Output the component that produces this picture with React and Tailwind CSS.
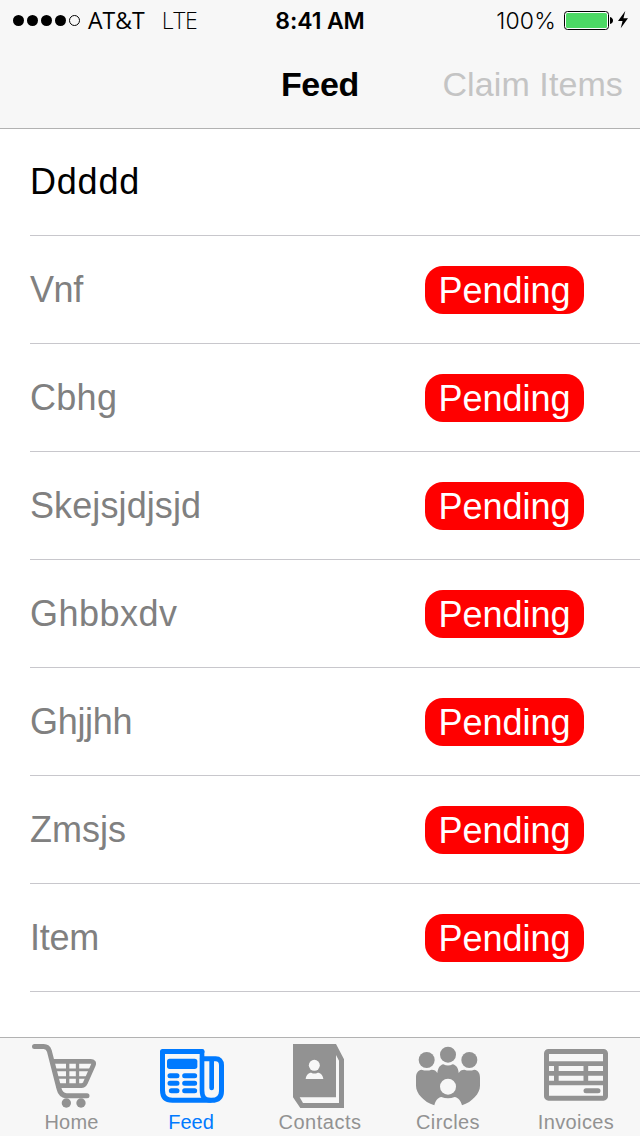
import React from "react";
import clsx from "clsx";

const items = [
  { name: "Ddddd", pending: false, tracking: "tracking-[0.8px]" },
  { name: "Vnf", pending: true, tracking: "tracking-[-0.4px]" },
  { name: "Cbhg", pending: true, tracking: "tracking-[0.3px]" },
  { name: "Skejsjdjsjd", pending: true, tracking: "tracking-[0.1px]" },
  { name: "Ghbbxdv", pending: true, tracking: "tracking-[0.5px]" },
  { name: "Ghjjhh", pending: true, tracking: "tracking-[-0.3px]" },
  { name: "Zmsjs", pending: true, tracking: "tracking-[0px]" },
  { name: "Item", pending: true, tracking: "tracking-[-0.3px]" },
];

const CartIcon = () => (
  <svg className="w-16 h-16" viewBox="66 42 192 192" fill="none" stroke="currentColor" strokeLinecap="round" strokeLinejoin="round">
    <path d="M73.500 49.500H101C111 49.500 115 53 118 63L147 176C150 189 157 197 170 197H231" strokeWidth="15" />
    <path d="M129 94H242C250 94 253 98 250 105L226 159C223 165 221 167 214 167H145" strokeWidth="14" />
    <path d="M135 119.500H242M141 142.500H232" strokeWidth="8" strokeLinecap="butt" />
    <path d="M173 95V165M202.500 95V165" strokeWidth="10" strokeLinecap="butt" />
    <g fill="currentColor" stroke="none">
      <circle cx="169" cy="219" r="14" />
      <circle cx="213" cy="219" r="14" />
    </g>
  </svg>
);

const FeedIcon = () => (
  <svg className="w-16 h-16" viewBox="60 42 192 192" fill="none" stroke="currentColor" strokeLinecap="round" strokeLinejoin="round">
    <path d="M186 64.500H67.500V181C67.500 200 77 211 97 211H215C234 211 244.500 202 244.500 183V105C244.500 93 238 86 227 86H187" strokeWidth="15" />
    <path d="M186 64.500V181C186 201 193 211 212 211" strokeWidth="14" />
    <path d="M215 88V174" strokeWidth="14" />
    <rect x="81" y="86" width="91" height="31" rx="8" fill="currentColor" stroke="none" />
    <path d="M90 137.500H111M134 137.500H164M90 160H111M134 160H164M94 182H111M134 182H164" strokeWidth="15" />
  </svg>
);

const ContactsIcon = () => (
  <svg className="w-16 h-16" viewBox="84 42 192 192" fill="currentColor">
    <path fillRule="evenodd" d="M99 42H228L252 88V234H121L99 202ZM228 75V202H119L129 219H237V92Z" />
    <circle cx="163" cy="106" r="16.500" fill="#f7f7f7" />
    <path d="M137 147C138 136 145 128 154 128Q163 133 173 128C182 128 189 136 190 147Z" fill="#f7f7f7" />
  </svg>
);

const CirclesIcon = () => (
  <svg className="w-16 h-16" viewBox="78 42 192 192" fill="currentColor">
    <circle cx="110" cy="90" r="24" />
    <circle cx="174" cy="74" r="24" />
    <circle cx="238" cy="90" r="24" />
    <path d="M95 119Q110 124 125 119Q137 119 142 129C144 113 150 105 160 103Q174 110 188 103C198 105 205 113 206 129Q211 119 223 119Q238 124 253 119C264 120 270 129 270 143V167C270 190 247 215 216 226C213 213 205 203 194 201Q174 209 154 201C143 203 136 213 133 226C101 215 78 190 78 167V143C78 129 84 120 95 119Z" />
    <circle cx="174" cy="170" r="24" fill="#f7f7f7" />
  </svg>
);

const InvoicesIcon = () => (
  <svg className="w-16 h-16" viewBox="72 42 192 192" fill="none" stroke="currentColor">
    <rect x="79.500" y="64.500" width="177" height="140" rx="6" strokeWidth="15" />
    <path d="M80 101H256M80 130H256M80 159H256" strokeWidth="14" />
    <path d="M109 96V164M197.500 96V164" strokeWidth="14" />
    <path d="M198 182H234" strokeWidth="15" strokeLinecap="round" />
  </svg>
);

const tabs = [
  { label: "Home", icon: CartIcon, className: "pl-[15px] tracking-[0.2px]" },
  { label: "Feed", icon: FeedIcon, active: true, className: "pr-[2px] tracking-[0px]" },
  { label: "Contacts", icon: ContactsIcon, className: "tracking-[0.5px]" },
  { label: "Circles", icon: CirclesIcon, className: "tracking-[0.4px]" },
  { label: "Invoices", icon: InvoicesIcon, className: "tracking-[0.4px]" },
];

const StatusBar = () => (
  <div className="grid grid-cols-3 h-10 items-center leading-9 whitespace-nowrap">
    <div className="flex items-center pl-[13px] font-['Open_Sans',sans-serif]">
      <div className="flex gap-[3px]">
        {[1, 2, 3, 4].map((dot) => (
          <span key={dot} className="size-[11px] rounded-full bg-black" />
        ))}
        <span className="size-[11px] rounded-full border border-black" />
      </div>
      <span className="ml-2 text-[23px] leading-9">AT&T</span>
      <span className="ml-[17px] text-[23px] leading-9 font-light tracking-[-0.3px]">LTE</span>
    </div>
    <div className="pt-0.5 text-center font-['Inter',sans-serif] text-[23px] leading-9 font-semibold tracking-[-0.1px]">8:41 AM</div>
    <div className="flex items-center justify-end pr-3">
      <span className="mr-2 pt-0.5 font-['Inter',sans-serif] text-[23px] leading-9 font-light tracking-[0.2px]">100%</span>
      <svg className="w-[49px] h-[19px]" viewBox="0 0 49 19">
        <rect x="0.500" y="0.500" width="44" height="18" rx="3" fill="white" stroke="black" />
        <rect x="2" y="2" width="41" height="15" rx="1.500" fill="#4cd964" />
        <path d="M46 6Q49 7 49 9.500Q49 12 46 13Z" />
      </svg>
      <svg className="ml-[5px] w-[10px] h-5" viewBox="0 0 11 20">
        <path d="M8 0L0 11H5L3 19L11 8H6Z" />
      </svg>
    </div>
  </div>
);

const App = () => {
  return (
    <div className="flex flex-col w-[640px] h-[1136px] overflow-hidden bg-white text-black font-['Liberation_Sans',Arial,sans-serif]">
      <header className="h-[129px] shrink-0 bg-[#f7f7f7] border-b border-[#b2b2b2]">
        <StatusBar />
        <div className="grid grid-cols-3 h-[88px] items-center text-[34px] whitespace-nowrap">
          <h1 className="col-start-2 text-center font-bold tracking-[-0.3px]">Feed</h1>
          <button className="justify-self-end pr-[17px] tracking-[0.1px] text-[#c4c4c4]">Claim Items</button>
        </div>
      </header>

      <ul className="flex-1">
        {items.map((item) => (
          <li key={item.name} className="flex items-center justify-between h-[108px] first:h-[107px] ml-[30px] pr-14 border-b border-[#c8c7cc] text-4xl">
            <span className={clsx(item.tracking, item.pending && "text-[#808080]")}>{item.name}</span>
            {item.pending && (
              <span className="flex items-center justify-center w-[159px] h-12 mt-px pt-0.5 rounded-[18px] bg-[#ff0000] text-white tracking-[0px]">Pending</span>
            )}
          </li>
        ))}
      </ul>

      <nav className="grid grid-cols-5 h-[99px] shrink-0 bg-[#f7f7f7] border-t border-[#b2b2b2]">
        {tabs.map(({ label, icon: Icon, active, className }) => (
          <button key={label} className={clsx("flex flex-col items-center pt-[6px]", active ? "text-[#007aff]" : "text-[#929292]")}>
            <Icon />
            <span className={clsx("mt-[2px] text-xl leading-6", className)}>{label}</span>
          </button>
        ))}
      </nav>
    </div>
  );
};

export default App;
